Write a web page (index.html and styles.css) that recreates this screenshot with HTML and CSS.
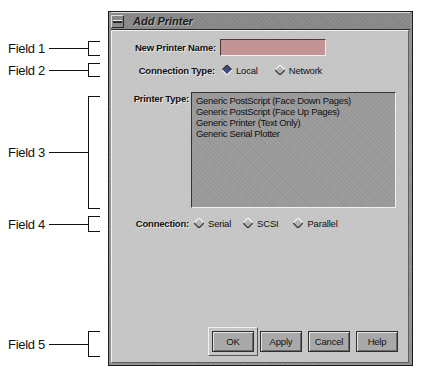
FILE: index.html
```html
<!DOCTYPE html>
<html lang="en">

<head>
    <meta charset="UTF-8">
    <meta name="viewport" content="width=device-width, initial-scale=1.0">
    <title>Add Printer</title>
    <link rel="stylesheet" href="styles.css">
</head>

<body>
    <div class="page">

        <div class="notes">
            <div class="note note-1">
                <span class="note-label">Field 1</span>
                <span class="note-line"></span>
                <span class="note-bracket"></span>
            </div>
            <div class="note note-2">
                <span class="note-label">Field 2</span>
                <span class="note-line"></span>
                <span class="note-bracket"></span>
            </div>
            <div class="note note-3">
                <span class="note-label">Field 3</span>
                <span class="note-line"></span>
                <span class="note-bracket"></span>
            </div>
            <div class="note note-4">
                <span class="note-label">Field 4</span>
                <span class="note-line"></span>
                <span class="note-bracket"></span>
            </div>
            <div class="note note-5">
                <span class="note-label">Field 5</span>
                <span class="note-line"></span>
                <span class="note-bracket"></span>
            </div>
        </div>

        <div class="dialog">
            <div class="titlebar">
                <span class="menu-btn"><span class="menu-dash"></span></span>
                <span class="title">Add Printer</span>
            </div>

            <div class="content">
                <div class="row row-name">
                    <label class="label label-name" for="printer-name">New Printer Name:</label>
                    <input class="text-field" id="printer-name" type="text">
                </div>

                <div class="row row-type">
                    <span class="label label-type">Connection Type:</span>
                    <span class="radio">
                        <svg width="10" height="10" viewBox="0 0 10 10">
                            <polygon points="5,0 10,5 5,10 0,5" fill="#3c4a8c" />
                            <polyline points="0,5 5,0 10,5" fill="none" stroke="#333" stroke-width="1.2" />
                            <polyline points="0,5 5,10 10,5" fill="none" stroke="#f2f2f2" stroke-width="1.2" />
                        </svg>
                        Local
                    </span>
                    <span class="radio radio-network">
                        <svg width="10" height="10" viewBox="0 0 10 10">
                            <polygon points="5,0 10,5 5,10 0,5" fill="#b4b4b4" />
                            <polyline points="0,5 5,0 10,5" fill="none" stroke="#f4f4f4" stroke-width="1.2" />
                            <polyline points="0,5 5,10 10,5" fill="none" stroke="#333" stroke-width="1.2" />
                        </svg>
                        Network
                    </span>
                </div>

                <div class="row row-list">
                    <span class="label label-list">Printer Type:</span>
                    <ul class="list">
                        <li>Generic PostScript (Face Down Pages)</li>
                        <li>Generic PostScript (Face Up Pages)</li>
                        <li>Generic Printer (Text Only)</li>
                        <li>Generic Serial Plotter</li>
                    </ul>
                </div>

                <div class="row row-conn">
                    <span class="label label-conn">Connection:</span>
                    <span class="radio">
                        <svg width="10" height="10" viewBox="0 0 10 10">
                            <polygon points="5,0 10,5 5,10 0,5" fill="#b4b4b4" />
                            <polyline points="0,5 5,0 10,5" fill="none" stroke="#f4f4f4" stroke-width="1.2" />
                            <polyline points="0,5 5,10 10,5" fill="none" stroke="#333" stroke-width="1.2" />
                        </svg>
                        Serial
                    </span>
                    <span class="radio radio-scsi">
                        <svg width="10" height="10" viewBox="0 0 10 10">
                            <polygon points="5,0 10,5 5,10 0,5" fill="#b4b4b4" />
                            <polyline points="0,5 5,0 10,5" fill="none" stroke="#f4f4f4" stroke-width="1.2" />
                            <polyline points="0,5 5,10 10,5" fill="none" stroke="#333" stroke-width="1.2" />
                        </svg>
                        SCSI
                    </span>
                    <span class="radio radio-parallel">
                        <svg width="10" height="10" viewBox="0 0 10 10">
                            <polygon points="5,0 10,5 5,10 0,5" fill="#b4b4b4" />
                            <polyline points="0,5 5,0 10,5" fill="none" stroke="#f4f4f4" stroke-width="1.2" />
                            <polyline points="0,5 5,10 10,5" fill="none" stroke="#333" stroke-width="1.2" />
                        </svg>
                        Parallel
                    </span>
                </div>

                <div class="buttons">
                    <span class="default-ring"><button class="button">OK</button></span>
                    <button class="button">Apply</button>
                    <button class="button">Cancel</button>
                    <button class="button">Help</button>
                </div>
            </div>
        </div>

    </div>
</body>

</html>
```

FILE: styles.css
```css
body {
    margin: 0;
    background-color: #ffffff;
    font-family: "Liberation Sans", Arial, sans-serif;
}

.page {
    display: flex;
    align-items: flex-start;
}

/* annotations on the left */

.notes {
    display: flex;
    flex-direction: column;
    width: 100px;
    padding-left: 8px;
    box-sizing: border-box;
}

.note {
    display: flex;
    align-items: center;
}

.note-label {
    font-size: 13px;
    color: #111;
    letter-spacing: -0.3px;
}

.note-line {
    flex: 1;
    height: 1px;
    margin-left: 4px;
    background-color: #111;
}

.note-bracket {
    width: 12px;
    height: 100%;
    box-sizing: border-box;
    border: 1px solid #111;
    border-right: none;
}

.note-1 {
    margin-top: 41px;
    height: 15px;
}

.note-2 {
    margin-top: 7px;
    height: 14px;
}

.note-3 {
    margin-top: 19px;
    height: 113px;
}

.note-4 {
    margin-top: 7px;
    height: 16px;
}

.note-5 {
    margin-top: 99px;
    height: 26px;
}

/* dialog window */

.dialog {
    margin-top: 11px;
    margin-left: 8px;
    width: 305px;
    height: 355px;
    box-sizing: border-box;
    border: 1px solid #1c1c1c;
    padding: 0 2px 2px 2px;
    background-color: #8e8e8e;
    background-image: repeating-linear-gradient(45deg, rgba(255, 255, 255, 0.1) 0 1px, transparent 1px 3px);
    display: flex;
    flex-direction: column;
}

.titlebar {
    height: 18px;
    box-sizing: border-box;
    display: flex;
    align-items: center;
    background-color: #8c8c8c;
    background-image: repeating-linear-gradient(45deg, rgba(0, 0, 0, 0.06) 0 1px, transparent 1px 3px);
    border-top: 1px solid #e2e2e2;
    border-bottom: 1px solid #2a2a2a;
}

.menu-btn {
    width: 13px;
    height: 13px;
    box-sizing: border-box;
    border: 1px solid #2a2a2a;
    border-top-color: #ddd;
    border-left-color: #ddd;
    display: flex;
    align-items: center;
    justify-content: center;
}

.menu-dash {
    width: 9px;
    height: 3px;
    background-color: #2a2a2a;
    border-top: 1px solid #eee;
    box-sizing: border-box;
}

.title {
    margin-left: 9px;
    font-size: 11px;
    font-weight: bold;
    font-style: italic;
    color: #1e1e1e;
    text-shadow: 1px 1px 0 #b0b0b0;
}

.content {
    flex: 1;
    margin-right: 1px;
    background-color: #c4c4c4;
    background-image: repeating-linear-gradient(45deg, rgba(255, 255, 255, 0.08) 0 1px, transparent 1px 3px);
    border: 1px solid #5e5e5e;
    border-top: 1px solid #f0f0f0;
    border-left: 1px solid #f0f0f0;
    padding: 8px 10px 6px 0;
    display: flex;
    flex-direction: column;
}

.row {
    display: flex;
    align-items: center;
    font-size: 9.5px;
    color: #111;
}

.label {
    font-weight: bold;
    text-align: right;
    flex-shrink: 0;
    letter-spacing: -0.2px;
    text-shadow: 1px 1px 0 #e8e8e8;
}

.row-name {
    height: 17px;
}

.label-name {
    width: 104px;
    margin-right: 4px;
}

.text-field {
    width: 106px;
    height: 17px;
    box-sizing: border-box;
    margin: 0;
    padding: 0;
    background-color: #c39494;
    border: 1px solid #4a3a3a;
    border-right-color: #eee;
    border-bottom-color: #eee;
}

.row-type {
    margin-top: 7px;
    height: 14px;
}

.label-type {
    width: 103px;
    margin-right: 7px;
}

.radio {
    display: flex;
    align-items: center;
    gap: 4px;
    letter-spacing: -0.2px;
}

.radio-network {
    margin-left: 17px;
}

.row-list {
    margin-top: 15px;
    align-items: flex-start;
}

.label-list {
    width: 77px;
    margin-right: 2px;
    margin-top: 1px;
}

.list {
    margin: 0;
    padding: 2px 4px;
    list-style: none;
    width: 205px;
    height: 116px;
    box-sizing: border-box;
    background-color: #9d9d9d;
    background-image: repeating-linear-gradient(45deg, rgba(0, 0, 0, 0.05) 0 1px, transparent 1px 3px);
    border: 1px solid #333;
    border-right-color: #f0f0f0;
    border-bottom-color: #f0f0f0;
    font-size: 9.5px;
    line-height: 11px;
    color: #111;
    letter-spacing: -0.3px;
}

.row-conn {
    margin-top: 8px;
    height: 14px;
}

.label-conn {
    width: 77px;
    margin-right: 5px;
}

.radio-scsi {
    margin-left: 12px;
}

.radio-parallel {
    margin-left: 15px;
}

/* buttons */

.buttons {
    margin-top: auto;
    display: flex;
    align-items: center;
    justify-content: flex-end;
    gap: 6px;
}

.default-ring {
    display: flex;
    padding: 3px;
    margin-right: -4px;
    border: 1px solid #f0f0f0;
    border-right-color: #555;
    border-bottom-color: #555;
}

.button {
    width: 42px;
    height: 21px;
    margin: 0;
    padding: 0;
    box-sizing: border-box;
    background-color: #a9a9a9;
    border: 1px solid #2e2e2e;
    box-shadow: inset 1px 1px 0 #e6e6e6, inset -1px -1px 0 #6a6a6a;
    font-family: "Liberation Sans", Arial, sans-serif;
    font-size: 9.5px;
    color: #111;
    letter-spacing: -0.2px;
}
```
